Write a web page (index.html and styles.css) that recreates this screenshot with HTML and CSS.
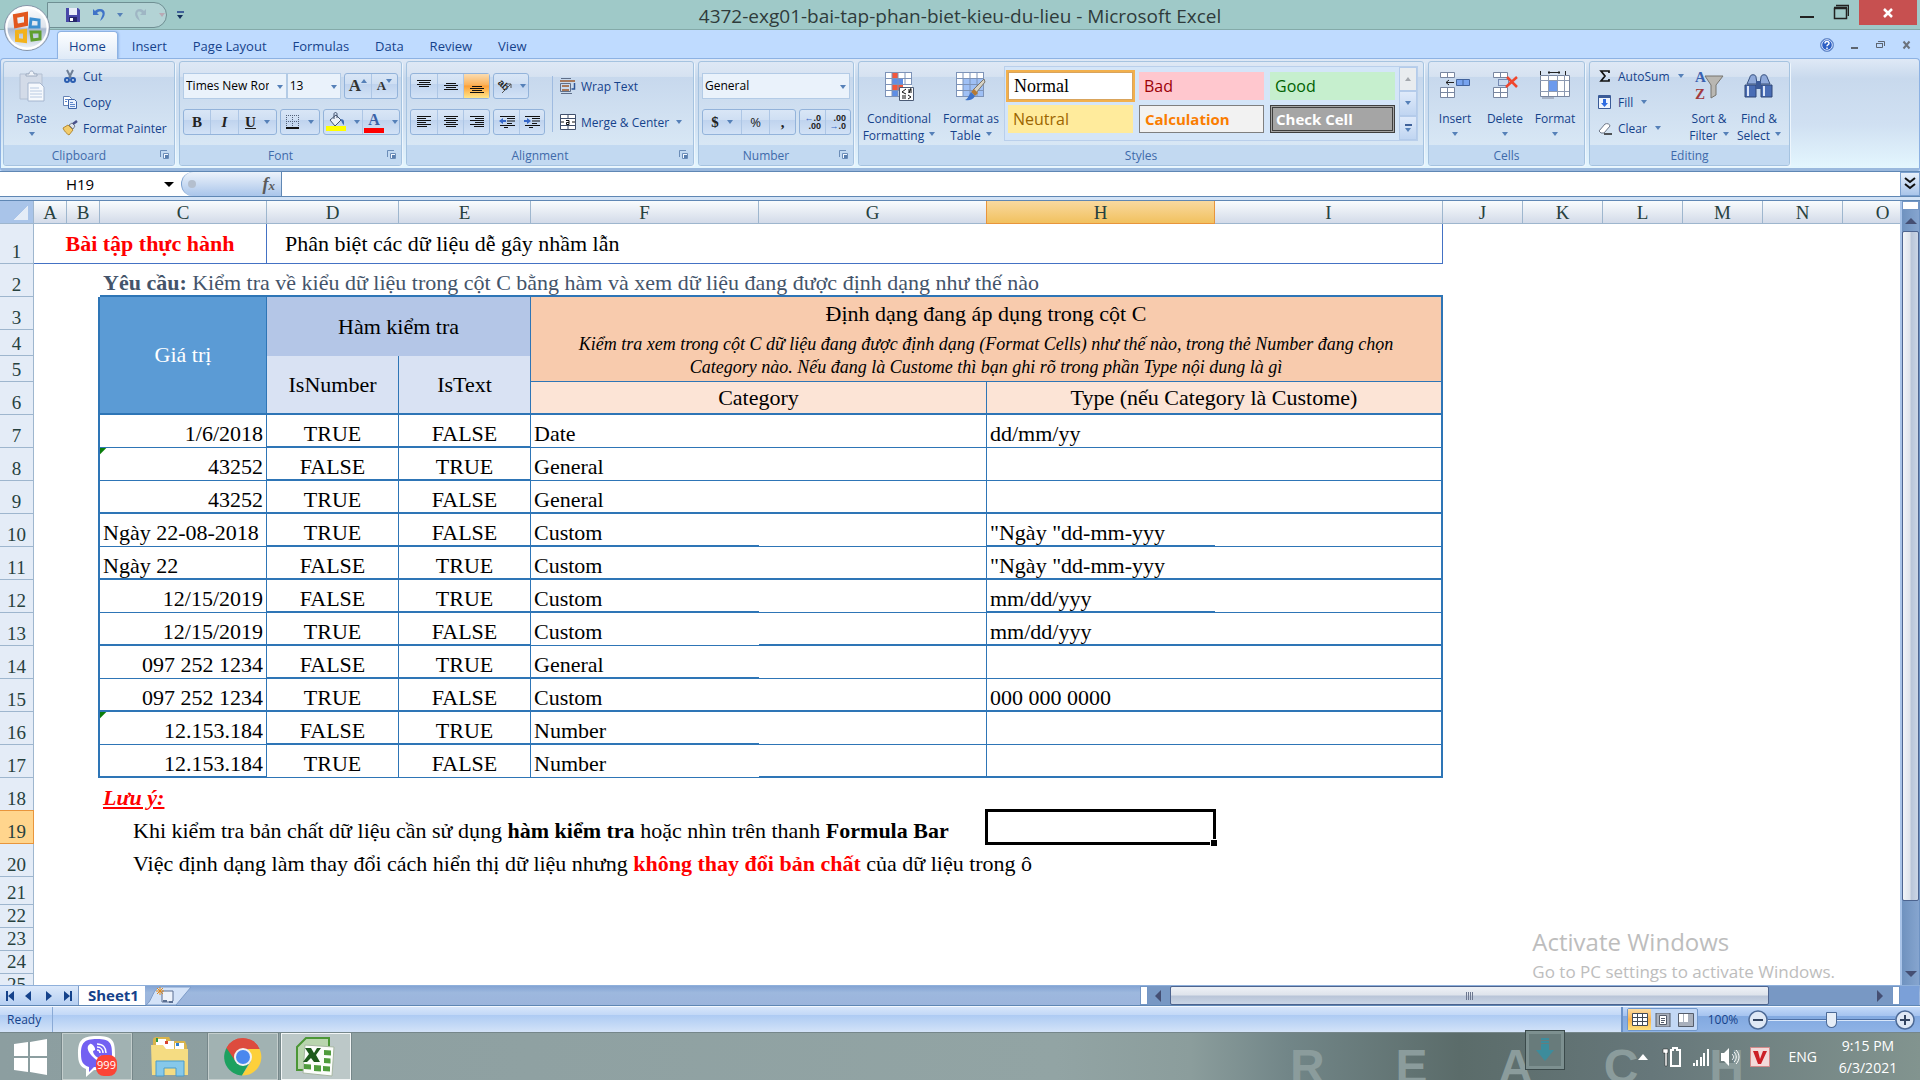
FILE: index.html
```html
<!DOCTYPE html>
<html lang="vi">
<head>
    <meta charset="UTF-8">
    <meta name="viewport" content="width=device-width, initial-scale=1.0">
    <title>4372-exg01-bai-tap-phan-biet-kieu-du-lieu - Microsoft Excel</title>
    <link rel="stylesheet" href="styles.css">
</head>
<body>
    <header class="titlebar">
        <button class="office-btn" aria-label="Office">
            <svg width="48" height="48" viewBox="0 0 48 48">
                <defs>
                    <linearGradient id="orb" x1="0" y1="0" x2="0" y2="1"><stop offset="0" stop-color="#fff"/><stop offset=".48" stop-color="#dde3ec"/><stop offset=".52" stop-color="#a9b9d0"/><stop offset="1" stop-color="#f4f8fd"/></linearGradient>
                </defs>
                <circle cx="24" cy="24" r="22.500" fill="url(#orb)" stroke="#8594a8"/>
                <circle cx="24" cy="24" r="20.500" fill="none" stroke="#fff" stroke-width="2"/>
                <g fill="none" stroke-width="4">
                    <path d="M12 12l11-2v10l-10 2z" stroke="#e2571e"/>
                    <path d="M28 15l8 1v7h-9z" stroke="#3c8fd0" stroke-width="3"/>
                    <path d="M14 28l8-1v10l-8-1z" stroke="#f3b21b"/>
                    <path d="M28 28h9v7l-8 1z" stroke="#5f9e2f" stroke-width="3"/>
                </g>
            </svg>
        </button>
        <div class="quick-access">
            <button aria-label="Save"><svg width="16" height="16"><path d="M1 1h12l2 2v12H1z" fill="#4747a8"/><path d="M4 1h8v7H4z" fill="#e8ecf8"/><path d="M4 10h8v5H4z" fill="#26266a"/><path d="M5 11h3v3H5z" fill="#fff"/></svg></button>
            <button aria-label="Undo"><svg width="16" height="16"><path d="M2 2v6h6L6 6c3-3 7-1 5 3l-2 5c7-5 6-13-1-12-2 0-3 1-4 2z" fill="#3f73c8"/></svg></button>
            <i class="caret"></i>
            <button aria-label="Redo"><svg width="16" height="16"><path d="M13 2v6H7l2-2C6 3 3 5 5 9l2 5C0 10 1 2 7 2c2 0 3 1 4 2z" fill="#9fb6c4"/></svg></button>
            <i class="caret faded"></i>
        </div>
        <button class="customize" aria-label="Customize toolbar"><i class="bar"></i><i class="caret"></i></button>
        <h1>4372-exg01-bai-tap-phan-biet-kieu-du-lieu - Microsoft Excel</h1>
        <div class="window-controls">
            <button aria-label="Minimize"><svg width="16" height="24"><path d="M1 16h14v2H1z" fill="#222"/></svg></button>
            <button aria-label="Restore"><svg width="16" height="24"><path d="M1.500 8.500h12v10h-12zM3 5.500h12.500V16M1 7.500h13" fill="none" stroke="#222" stroke-width="1.500"/></svg></button>
            <button class="close" aria-label="Close"><svg width="12" height="12"><path d="M2 2l8 8M10 2l-8 8" stroke="#fff" stroke-width="2.500"/></svg></button>
        </div>
    </header>

    <nav class="tabs">
        <a href="#" class="active">Home</a>
        <a href="#">Insert</a>
        <a href="#">Page Layout</a>
        <a href="#">Formulas</a>
        <a href="#">Data</a>
        <a href="#">Review</a>
        <a href="#">View</a>
        <div class="book-controls">
            <button aria-label="Help"><svg width="14" height="14"><circle cx="7" cy="7" r="6.500" fill="#2d5fc4" stroke="#6f92cc"/><circle cx="7" cy="7" r="5.300" fill="none" stroke="#dfe9fb"/><path d="M5 5.500c0-2.500 4-2.500 4-.300 0 1.600-2 1.500-2 3M7 9.500V11" stroke="#fff" stroke-width="1.500" fill="none"/></svg></button>
            <button aria-label="Minimize workbook"><svg width="10" height="14"><path d="M1 9h7v2H1z" fill="#5d6570"/></svg></button>
            <button aria-label="Restore workbook"><svg width="10" height="14"><path d="M.500 5.500h6v4h-6zM2 3.500h6.500V8" fill="none" stroke="#5d6570"/><path d="M0 5h7v1H0z" fill="#5d6570"/></svg></button>
            <button aria-label="Close workbook"><svg width="10" height="14"><path d="M1.500 3.500l6 7M7.500 3.500l-6 7" stroke="#6c737d" stroke-width="2"/></svg></button>
        </div>
    </nav>

    <section class="ribbon">
        <div class="group clipboard">
            <div class="group-body">
                <button class="big">
                    <svg width="28" height="32"><path d="M2 4h22v25H2z" fill="#d3dbe8" stroke="#b3c0d3"/><path d="M8 6V4h3c0-4 5-4 5 0h3v2z" fill="#eef2f8" stroke="#9dabc0"/><path d="M10 13h12l4 4v14H10z" fill="#f6f9fd" stroke="#a5b6cf"/><path d="M12 18h9M12 21h12M12 24h12M12 27h12" stroke="#b9cae2"/></svg>
                    <span>Paste</span>
                    <i class="caret"></i>
                </button>
                <div class="stack">
                    <button class="small"><svg width="16" height="16"><path d="M5 2l4 8M11 2L7 10" stroke="#6f7f96" stroke-width="2"/><circle cx="5" cy="12" r="2" fill="none" stroke="#2a5db0" stroke-width="2"/><circle cx="11" cy="12" r="2" fill="none" stroke="#2a5db0" stroke-width="2"/></svg>Cut</button>
                    <button class="small"><svg width="16" height="16"><path d="M1.500 2.500h6l2 2v7h-8z" fill="#fff" stroke="#6482b4"/><path d="M6.500 5.500h6l2 2v7h-8z" fill="#e9f1fd" stroke="#3d64a8"/><path d="M8 8.500h3M8 10.500h5M8 12.500h5M3 5.500h3M3 7.500h2" stroke="#5c86cb"/></svg>Copy</button>
                    <button class="small"><svg width="16" height="16"><path d="M1 8l5-3 5 5-4 5c-2-1-5-4-6-7z" fill="#f2cc6b" stroke="#b38a35"/><path d="M7 5l3-2 3 3-2 3z" fill="#dfe3ea" stroke="#777f8c"/><path d="M11 4l4-3" stroke="#49518a" stroke-width="2.500"/></svg>Format Painter</button>
                </div>
            </div>
            <div class="group-label has-launcher">Clipboard<svg class="launcher" width="9" height="9"><path d="M.500 7V.500H7" fill="none" stroke="#6b8db8"/><path d="M3.500 3.500h5v5h-5z" fill="#f4f8fd" stroke="#6b8db8"/><path d="M5 5h3v3H5z" fill="#5a7fae"/></svg></div>
        </div>

        <div class="group font">
            <div class="group-body rows">
                <div class="row">
                    <span class="combo font-name"><select aria-label="Font"><option>Times New Roman</option></select></span><span class="combo font-size"><select aria-label="Font size"><option>13</option></select></span>
                    <div class="btns grow">
                        <button class="serif" aria-label="Grow font">A<i class="tri up"></i></button>
                        <button class="serif less" aria-label="Shrink font">A<i class="tri"></i></button>
                    </div>
                </div>
                <div class="row">
                    <div class="btns">
                        <button class="serif w26"><b>B</b></button>
                        <button class="serif w28"><i>I</i></button>
                        <button class="serif w38"><u>U</u><i class="caret"></i></button>
                    </div>
                    <div class="btns">
                        <button class="w38" aria-label="Borders"><svg width="14" height="14"><path d="M.500 0v12M6.500 0v12M12.500 0v12M0 .500h13M0 6.500h13" stroke="#53627a" stroke-dasharray="1 1"/><path d="M0 13h13" stroke="#111" stroke-width="2"/></svg><i class="caret"></i></button>
                    </div>
                    <div class="btns">
                        <button class="w38" aria-label="Fill color"><svg width="20" height="20"><path d="M4 8l6-5 5 5-6 6z" fill="#eaf0f8" stroke="#42536e"/><path d="M8 7V2c0-2 3-2 3 0v4" fill="none" stroke="#42536e"/><path d="M14 7c5 0 4 3 4 6-2-1-2-4-4-6z" fill="#3e6db5"/><path d="M0 14h20v5H0z" fill="#ff0"/></svg><i class="caret"></i></button>
                        <button class="w37 font-color" aria-label="Font color"><span>A</span><i class="caret"></i></button>
                    </div>
                </div>
            </div>
            <div class="group-label has-launcher">Font<svg class="launcher" width="9" height="9"><path d="M.500 7V.500H7" fill="none" stroke="#6b8db8"/><path d="M3.500 3.500h5v5h-5z" fill="#f4f8fd" stroke="#6b8db8"/><path d="M5 5h3v3H5z" fill="#5a7fae"/></svg></div>
        </div>

        <div class="group alignment">
            <div class="group-body">
                <div class="rows left">
                    <div class="row">
                        <div class="btns">
                            <button class="w26" aria-label="Top align"><svg width="14" height="14"><path d="M0 1.500h14M2 3.500h11M0 5.500h14M2 7.500h10" stroke="#111"/></svg></button>
                            <button class="w26" aria-label="Middle align"><svg width="14" height="14"><path d="M2 4.500h10M0 6.500h14M2 8.500h10M0 10.500h14" stroke="#111"/></svg></button>
                            <button class="w26 on" aria-label="Bottom align"><svg width="14" height="14"><path d="M2 7.500h10M0 9.500h14M2 11.500h10M0 13.500h14" stroke="#111"/></svg></button>
                        </div>
                        <div class="btns">
                            <button class="w34" aria-label="Orientation"><svg width="16" height="16"><text class="ab" x="0" y="8" transform="rotate(45 4 8)">ab</text><path d="M6 15l9-9M15 6v4M15 6h-4" stroke="#555" fill="none"/></svg><i class="caret"></i></button>
                        </div>
                    </div>
                    <div class="row">
                        <div class="btns">
                            <button class="w26" aria-label="Align left"><svg width="14" height="12"><path d="M0 .500h14M0 2.500h9M0 4.500h14M0 6.500h9M0 8.500h14M0 10.500h10" stroke="#111"/></svg></button>
                            <button class="w26" aria-label="Center"><svg width="14" height="12"><path d="M0 .500h14M2 2.500h10M0 4.500h14M2 6.500h10M0 8.500h14M2 10.500h10" stroke="#111"/></svg></button>
                            <button class="w26" aria-label="Align right"><svg width="14" height="12"><path d="M0 .500h14M5 2.500h9M0 4.500h14M5 6.500h9M0 8.500h14M4 10.500h10" stroke="#111"/></svg></button>
                        </div>
                        <div class="btns">
                            <button class="w25" aria-label="Decrease indent"><svg width="16" height="14"><path d="M1 1.500h15M8 3.500h8M8 6h8M8 8.500h5M1 10.500h15M5 12.500h4" stroke="#111"/><path d="M0 6l4-3v2h3v2H4v2z" fill="#3566c8"/></svg></button>
                            <button class="w25" aria-label="Increase indent"><svg width="16" height="14"><path d="M1 1.500h15M8 3.500h8M8 6h8M8 8.500h5M1 10.500h15M5 12.500h4" stroke="#111"/><path d="M7 6L3 3v2H0v2h3v2z" fill="#3566c8"/></svg></button>
                        </div>
                    </div>
                </div>
                <div class="rows wraps">
                    <button class="small"><svg width="16" height="16"><path d="M1 .500h10M1 15.500h11" stroke="#5f6f8a"/><path d="M0 3h15M2 8h7M2 12h7" stroke="#9a5a2d" stroke-width="1.500"/><path d="M.500 5.500h10v8H.500z" fill="none" stroke="#5f6f8a"/><path d="M14.500 5v6h-3" fill="none" stroke="#2d5596" stroke-width="1.500"/></svg>Wrap Text</button>
                    <button class="small"><svg width="16" height="16"><path d="M.500.500h15v15H.500z" fill="#fff" stroke="#40506c"/><path d="M0 4.500h16M0 11.500h16M8 0v4M8 12v4" stroke="#40506c"/><path d="M1 8h3M12 8h3" stroke="#111"/><path d="M6 6.500h3v4H6.500v-2H9" fill="none" stroke="#111"/></svg>Merge &amp; Center<i class="caret"></i></button>
                </div>
            </div>
            <div class="group-label has-launcher">Alignment<svg class="launcher" width="9" height="9"><path d="M.500 7V.500H7" fill="none" stroke="#6b8db8"/><path d="M3.500 3.500h5v5h-5z" fill="#f4f8fd" stroke="#6b8db8"/><path d="M5 5h3v3H5z" fill="#5a7fae"/></svg></div>
        </div>

        <div class="group number">
            <div class="group-body rows">
                <div class="row">
                    <span class="combo format"><select aria-label="Number format"><option>General</option></select></span>
                </div>
                <div class="row">
                    <div class="btns">
                        <button class="serif w38"><b>$</b><i class="caret"></i></button>
                        <button class="w28 pct">%</button>
                        <button class="serif w26"><b>,</b></button>
                    </div>
                    <div class="btns">
                        <button class="w25 dec" aria-label="Increase decimal"><span><em>←</em>.0</span><span>.00</span></button>
                        <button class="w25 dec" aria-label="Decrease decimal"><span>.00</span><span><em>→</em>.0</span></button>
                    </div>
                </div>
            </div>
            <div class="group-label has-launcher">Number<svg class="launcher" width="9" height="9"><path d="M.500 7V.500H7" fill="none" stroke="#6b8db8"/><path d="M3.500 3.500h5v5h-5z" fill="#f4f8fd" stroke="#6b8db8"/><path d="M5 5h3v3H5z" fill="#5a7fae"/></svg></div>
        </div>

        <div class="group styles">
            <div class="group-body">
                <button class="big wide">
                    <svg width="32" height="32"><path d="M2 2h27v25H2z" fill="#fff"/><path d="M9 2h6v6H9zM9 14h11v6H9z" fill="#f2573c"/><path d="M9 8h11v6H9zM9 20h6v7H9z" fill="#5e8ee6"/><path d="M2 2.500h27M2 8.500h27M2 14.500h27M2 20.500h18M2 26.500h15M2.500 2v25M9 2v25M15 2v25M22 2v12M28.500 2v12" stroke="#7d93b8"/><path d="M16.500 17.500h14v13h-14z" fill="#fdfdfd" stroke="#4a5a74"/><path d="M23 19l-4 3 4 2M19 26h4M19 28h4M25 20h4M25 22h4M28 18l-2 5M25 25l3 2-3 2" fill="none" stroke="#111"/></svg>
                    <span>Conditional<br>Formatting <i class="caret"></i></span>
                </button>
                <button class="big wide">
                    <svg width="32" height="32"><path d="M1 2h28v25H1z" fill="#fff"/><path d="M8 8h21v18H8z" fill="#9fc0f5"/><path d="M1 2.500h28M1 8.500h28M1 14.500h28M1 20.500h28M1 26.500h28M1.500 2v25M8 2v25M15 2v25M22 2v25M28.500 2v25" stroke="#7d93b8"/><path d="M29 9l1 3-9 11-3-3z" fill="#d8d3c6" stroke="#7b766b"/><path d="M19 19l4 4-3 3-4-4z" fill="#b57b35"/><path d="M16 22l4 4c-2 4-6 5-10 4 3-1 4-5 6-8z" fill="#3f74c9"/></svg>
                    <span>Format as<br>Table <i class="caret"></i></span>
                </button>
                <div class="gallery">
                    <div class="gallery-items">
                        <button class="style-normal">Normal</button>
                        <button class="style-bad">Bad</button>
                        <button class="style-good">Good</button>
                        <button class="style-neutral">Neutral</button>
                        <button class="style-calc">Calculation</button>
                        <button class="style-check">Check Cell</button>
                    </div>
                    <div class="gallery-scroll">
                        <button class="off" aria-label="Scroll up"><i class="tri up"></i></button>
                        <button aria-label="Scroll down"><i class="tri"></i></button>
                        <button aria-label="More styles"><i class="bar"></i><i class="tri"></i></button>
                    </div>
                </div>
            </div>
            <div class="group-label">Styles</div>
        </div>

        <div class="group cells">
            <div class="group-body">
                <button class="big">
                    <svg width="32" height="32"><path d="M1.500 2.500h14v5h-14zM1.500 17.500h14v10h-14zM8.500 2v6M8.500 17v11M1 22.500h15" fill="#fff" stroke="#7886a0"/><path d="M17.500 9.500h13v6h-13zM24 9v7" fill="#77a3ee" stroke="#41629c"/><path d="M7 12.500h8M10 10l-3 2.500 3 2.500" fill="none" stroke="#222"/></svg>
                    <span>Insert</span><i class="caret"></i>
                </button>
                <button class="big">
                    <svg width="32" height="32"><path d="M4.500 2.500h14v5h-14zM4.500 17.500h14v10h-14zM11.500 2v6M11.500 17v11M4 22.500h15" fill="#fff" stroke="#7886a0"/><path d="M9.500 9.500h10v6h-10z" fill="none" stroke="#223a78" stroke-dasharray="1 1"/><path d="M18 7l10 10M28 7l-11 10" stroke="#f0462c" stroke-width="2.500"/></svg>
                    <span>Delete</span><i class="caret"></i>
                </button>
                <button class="big">
                    <svg width="32" height="32"><path d="M1.500 5.500h29v21h-29z" fill="#fff" stroke="#7886a0"/><path d="M9.500 10.500h9v11h-9z" fill="#6c9aec"/><path d="M1 10.500h29M1 21.500h29M9.500 5v21M18.500 5v21M25.500 5v21" stroke="#8d9ab2"/><path d="M1.500 1v4M26.500 1v4M9 2.500h12M10 1v3M20 1v3" stroke="#222"/><path d="M3 28h12" stroke="#a6b2c6" stroke-width="2"/></svg>
                    <span>Format</span><i class="caret"></i>
                </button>
            </div>
            <div class="group-label">Cells</div>
        </div>

        <div class="group editing">
            <div class="group-body">
                <div class="stack">
                    <button class="small"><svg width="14" height="16"><path d="M11 5V3H3l4 5-4 5h8v-2" fill="none" stroke="#111" stroke-width="1.700"/></svg>AutoSum<i class="caret"></i></button>
                    <button class="small"><svg width="14" height="16"><path d="M.500 1.500h12v13H.500z" fill="#eef4fd" stroke="#3a5b98"/><path d="M1 2h12v2H1z" fill="#3a5b98"/><path d="M5 5h3v4h2l-3.500 4L3 9h2z" fill="#2e6be0"/></svg>Fill<i class="caret"></i></button>
                    <button class="small"><svg width="14" height="16"><path d="M1 11l6-7c2-1 5 0 5 2l-6 7H3z" fill="#fff" stroke="#6d7787"/><path d="M6 14h8" stroke="#222" stroke-width="1.500"/></svg>Clear<i class="caret"></i></button>
                </div>
                <button class="big">
                    <svg width="32" height="32"><text class="az a" x="2" y="12">A</text><text class="az z" x="2" y="29">Z</text><path d="M12 6h18l-7 9v10l-5 3V15z" fill="#b9b7b2" stroke="#77756f"/></svg>
                    <span>Sort &amp;<br>Filter <i class="caret"></i></span>
                </button>
                <button class="big">
                    <svg width="32" height="32"><path d="M7 7c0-3 6-3 6 0l1 7H4zM18 7c0-3 6-3 6 0l3 7H17z" fill="#8fa9da" stroke="#38517f"/><path d="M2 15h11v12H2zM18 15h11v12H18z" fill="#4a6db5" stroke="#2f4676"/><path d="M13 11h5v8h-5z" fill="#3c5a98"/><path d="M5 16v10M21 16v10" stroke="#dce6f8" stroke-width="2"/></svg>
                    <span>Find &amp;<br>Select <i class="caret"></i></span>
                </button>
            </div>
            <div class="group-label">Editing</div>
        </div>
    </section>

    <section class="formula-bar">
        <span class="name-box"><input type="text" value="H19" aria-label="Name box"></span>
        <button class="fx" aria-label="Insert function"><i class="knob"></i><span>f<small>x</small></span></button>
        <input type="text" class="formula" aria-label="Formula bar">
        <button class="expand" aria-label="Expand formula bar"><svg width="12" height="14"><path d="M1 1l5 4 5-4M1 7l5 4 5-4" fill="none" stroke="#111" stroke-width="2"/></svg></button>
    </section>

    <main class="workspace">
        <div class="sheet-view">
            <table class="sheet">
                <colgroup>
                    <col class="c-head"><col class="c-ab"><col class="c-ab"><col class="c-c"><col class="c-de"><col class="c-de">
                    <col class="c-wide"><col class="c-wide"><col class="c-wide"><col class="c-wide">
                    <col class="c-std"><col class="c-std"><col class="c-std"><col class="c-std"><col class="c-std"><col class="c-std">
                </colgroup>
                <thead>
                    <tr>
                        <th class="corner"></th>
                        <th>A</th><th>B</th><th>C</th><th>D</th><th>E</th><th>F</th><th>G</th><th class="current">H</th><th>I</th>
                        <th>J</th><th>K</th><th>L</th><th>M</th><th>N</th><th>O</th>
                    </tr>
                </thead>
                <tbody>
                    <tr class="r1"><th>1</th><td colspan="3" class="heading">Bài tập thực hành</td><td colspan="6" class="subject">Phân biệt các dữ liệu dễ gây nhầm lẫn</td><td colspan="6"></td></tr>
                    <tr><th>2</th><td></td><td></td><td colspan="7" class="request thick"><b>Yêu cầu:</b> Kiểm tra về kiểu dữ liệu trong cột C bằng hàm và xem dữ liệu đang được định dạng như thế nào</td><td colspan="6"></td></tr>
                    <tr><th>3</th><td></td><td class="edge"></td><td rowspan="4" class="h-value b thick">Giá trị</td><td colspan="2" rowspan="2" class="h-check">Hàm kiểm tra</td><td colspan="4" class="h-format">Định dạng đang áp dụng trong cột C</td><td colspan="6"></td></tr>
                    <tr class="short"><th>4</th><td></td><td class="edge"></td><td colspan="4" rowspan="2" class="h-note b">Kiểm tra xem trong cột C dữ liệu đang được định dạng (Format Cells) như thế nào, trong thẻ Number đang chọn<br>Category nào. Nếu đang là Custome thì bạn ghi rõ trong phần Type nội dung là gì</td><td colspan="6"></td></tr>
                    <tr class="short"><th>5</th><td></td><td class="edge"></td><td rowspan="2" class="h-sub b thick">IsNumber</td><td rowspan="2" class="h-sub b thick">IsText</td><td colspan="6"></td></tr>
                    <tr><th>6</th><td></td><td class="edge"></td><td colspan="2" class="h-cat b thick">Category</td><td colspan="2" class="h-cat last thick">Type (nếu Category là Custome)</td><td colspan="6"></td></tr>
                    <tr><th>7</th><td></td><td class="edge"></td><td class="b num">1/6/2018</td><td class="b mid thick">TRUE</td><td class="b mid thick">FALSE</td><td class="f">Date</td><td class="b"></td><td class="f">dd/mm/yy</td><td class="last"></td><td colspan="6"></td></tr>
                    <tr><th>8</th><td></td><td class="edge"></td><td class="b num flagged">43252</td><td class="b mid thick">FALSE</td><td class="b mid thick">TRUE</td><td class="f">General</td><td class="b"></td><td class="f"></td><td class="last"></td><td colspan="6"></td></tr>
                    <tr><th>9</th><td></td><td class="edge"></td><td class="b num thick">43252</td><td class="b mid thick">TRUE</td><td class="b mid thick">FALSE</td><td class="f thick">General</td><td class="b thick"></td><td class="f thick"></td><td class="last thick"></td><td colspan="6"></td></tr>
                    <tr><th>10</th><td></td><td class="edge"></td><td class="b">Ngày 22-08-2018</td><td class="b mid thick">TRUE</td><td class="b mid thick">FALSE</td><td class="f thick">Custom</td><td class="b"></td><td class="f thick">"Ngày "dd-mm-yyy</td><td class="last"></td><td colspan="6"></td></tr>
                    <tr><th>11</th><td></td><td class="edge"></td><td class="b thick">Ngày 22</td><td class="b mid thick">FALSE</td><td class="b mid thick">TRUE</td><td class="f thick">Custom</td><td class="b thick"></td><td class="f thick">"Ngày "dd-mm-yyy</td><td class="last thick"></td><td colspan="6"></td></tr>
                    <tr><th>12</th><td></td><td class="edge"></td><td class="b num">12/15/2019</td><td class="b mid thick">FALSE</td><td class="b mid thick">TRUE</td><td class="f thick">Custom</td><td class="b"></td><td class="f thick">mm/dd/yyy</td><td class="last"></td><td colspan="6"></td></tr>
                    <tr><th>13</th><td></td><td class="edge"></td><td class="b num thick">12/15/2019</td><td class="b mid thick">TRUE</td><td class="b mid thick">FALSE</td><td class="f">Custom</td><td class="b thick"></td><td class="f thick">mm/dd/yyy</td><td class="last thick"></td><td colspan="6"></td></tr>
                    <tr><th>14</th><td></td><td class="edge"></td><td class="b num">097 252 1234</td><td class="b mid thick">FALSE</td><td class="b mid thick">TRUE</td><td class="f thick">General</td><td class="b"></td><td class="f"></td><td class="last"></td><td colspan="6"></td></tr>
                    <tr><th>15</th><td></td><td class="edge"></td><td class="b num thick">097 252 1234</td><td class="b mid thick">TRUE</td><td class="b mid thick">FALSE</td><td class="f thick">Custom</td><td class="b thick"></td><td class="f thick">000 000 0000</td><td class="last thick"></td><td colspan="6"></td></tr>
                    <tr><th>16</th><td></td><td class="edge"></td><td class="b num flagged">12.153.184</td><td class="b mid thick">FALSE</td><td class="b mid thick">TRUE</td><td class="f thick">Number</td><td class="b"></td><td class="f"></td><td class="last"></td><td colspan="6"></td></tr>
                    <tr><th>17</th><td></td><td class="edge"></td><td class="b num thick">12.153.184</td><td class="b mid">TRUE</td><td class="b mid">FALSE</td><td class="f">Number</td><td class="b thick"></td><td class="f thick"></td><td class="last thick"></td><td colspan="6"></td></tr>
                    <tr><th>18</th><td></td><td></td><td class="note-title">Lưu ý:</td><td colspan="12"></td></tr>
                    <tr><th class="current">19</th><td></td><td></td><td colspan="5" class="indent">Khi kiểm tra bản chất dữ liệu cần sử dụng <b>hàm kiểm tra</b> hoặc nhìn trên thanh <b>Formula Bar</b></td><td class="active-cell"></td><td colspan="7"></td></tr>
                    <tr><th>20</th><td></td><td></td><td colspan="6" class="indent">Việc định dạng làm thay đổi cách hiển thị dữ liệu nhưng <b class="red">không thay đổi bản chất</b> của dữ liệu trong ô</td><td colspan="7"></td></tr>
                    <tr class="r21"><th>21</th><td colspan="15"></td></tr>
                    <tr class="plain"><th>22</th><td colspan="15"></td></tr>
                    <tr class="plain"><th>23</th><td colspan="15"></td></tr>
                    <tr class="plain"><th>24</th><td colspan="15"></td></tr>
                    <tr class="plain"><th>25</th><td colspan="15"></td></tr>
                </tbody>
            </table>
            <div class="watermark">
                <p class="big-line">Activate Windows</p>
                <p>Go to PC settings to activate Windows.</p>
            </div>
        </div>
        <div class="vscroll">
            <div class="split"></div>
            <i class="arrow up"></i>
            <div class="thumb"></div>
            <i class="arrow down"></i>
        </div>
    </main>

    <section class="sheet-bar">
        <div class="sheet-nav">
            <button aria-label="First sheet"><svg width="8" height="10"><path d="M0 0h2v10H0zM8 0v10L2 5z" fill="#15428b"/></svg></button>
            <button aria-label="Previous sheet"><svg width="8" height="10"><path d="M6 0v10L0 5z" fill="#15428b"/></svg></button>
            <button aria-label="Next sheet"><svg width="8" height="10"><path d="M1 0v10l6-5z" fill="#15428b"/></svg></button>
            <button aria-label="Last sheet"><svg width="8" height="10"><path d="M6 0h2v10H6zM0 0v10l6-5z" fill="#15428b"/></svg></button>
        </div>
        <a href="#" class="sheet-tab">Sheet1</a>
        <button class="new-sheet" aria-label="Insert worksheet">
            <svg width="48" height="20"><path d="M1 19C7 16 8 1 16 1h30L31 19z" fill="#d4e3f8" stroke="#7d9cc9"/><path d="M17 5h11v10l-3 1H17z" fill="#eef3fb" stroke="#5a6f92"/><path d="M18 15h4M24 16h4" stroke="#5a6f92" stroke-width="2"/><path d="M15 1v8M11 5h8M12 2l6 6M18 2l-6 6" stroke="#e08a1c"/></svg>
        </button>
        <div class="track"></div>
        <div class="hscroll">
            <div class="split"></div>
            <i class="arrow left"></i>
            <div class="thumb"><svg width="8" height="8"><path d="M.500 0v8M2.500 0v8M4.500 0v8M6.500 0v8" stroke="#6d7890"/></svg></div>
            <i class="arrow right"></i>
            <div class="split"></div>
        </div>
    </section>

    <footer class="statusbar">
        <span class="ready">Ready</span>
        <div class="zoom-area">
            <div class="views">
                <button class="on" aria-label="Normal view"><svg width="16" height="14"><path d="M.500.500h15v12H.500zM0 4.500h16M0 8.500h16M5.500 0v13M10.500 0v13" fill="#fff" stroke="#444b57"/></svg></button>
                <button aria-label="Page layout view"><svg width="16" height="14"><path d="M1 0h14v14H1z" fill="#a9b0bc" stroke="#555d6b"/><path d="M4.500 2.500h7v9h-7z" fill="#fff" stroke="#555d6b"/><path d="M6 5.500h4M6 7.500h4M6 9.500h3" stroke="#555d6b"/></svg></button>
                <button aria-label="Page break view"><svg width="16" height="14"><path d="M.500.500h15v13H.500z" fill="#a9b0bc" stroke="#555d6b"/><path d="M1 1h4v8H1zM6 1h4v8H6z" fill="#fff"/></svg></button>
            </div>
            <span class="zoom-value">100%</span>
            <button class="round" aria-label="Zoom out"><svg width="20" height="20"><circle cx="10" cy="10" r="9" fill="#dfe8f5" stroke="#4d6a96" stroke-width="1.500"/><path d="M5 10h10" stroke="#32435f" stroke-width="2"/></svg></button>
            <input type="range" min="0" max="100" value="50" aria-label="Zoom">
            <button class="round" aria-label="Zoom in"><svg width="20" height="20"><circle cx="10" cy="10" r="9" fill="#dfe8f5" stroke="#4d6a96" stroke-width="1.500"/><path d="M5 10h10M10 5v10" stroke="#32435f" stroke-width="2"/></svg></button>
        </div>
    </footer>

    <div class="taskbar">
        <div class="wallpaper" aria-hidden="true"><span>R</span><span>E</span><span>A</span><span>C</span><span>H</span></div>
        <button class="start" aria-label="Start"><svg width="34" height="36"><path d="M0 5l14-2v14H0zM16 3l17-3v17H16zM0 19h14v14L0 31zM16 19h17v17l-17-3z" fill="#fff"/></svg></button>
        <button class="task open" aria-label="Viber">
            <svg width="40" height="44"><path d="M20 1C4 1 1 6 1 19c0 8 2 13 8 15v8l8-7c19 1 21-4 21-16C38 6 36 1 20 1z" fill="#fff"/><path d="M20 4C7 4 4 8 4 19c0 8 2 11 8 13v5l5-5c15 1 18-2 18-13C35 8 33 4 20 4z" fill="#7360f2"/><path d="M13 9c-5 3-1 9 3 13s9 7 12 4c2-2-3-6-5-5l-1 2c-3-1-6-4-6-7l2-1c1-2-3-7-5-6z" fill="#fff"/><path d="M20 9c6 0 9 4 9 9M20 12c4 0 6 3 6 6M20 15c2 0 3 1 3 3" fill="none" stroke="#fff" stroke-width="1.500"/></svg>
            <span class="badge">999</span>
        </button>
        <button class="task" aria-label="File Explorer">
            <svg width="40" height="42"><path d="M3 4c0-3 3-3 4-3h12l2 4h14l2 5v28H2z" fill="#d9b44c"/><path d="M6 3h10v8H6zM14 5h10v8H14zM25 7h9v6h-9z" fill="#fff"/><path d="M6 2h2v4H6z" fill="#2f9a46"/><path d="M15 5h3v3h-3z" fill="#d8432e"/><path d="M26 7h3v3h-3z" fill="#2f7fd0"/><path d="M1 9h12l3 4h22v26H2z" fill="#f5dc82"/><path d="M6 40V25h28v15h-8v-8H14v8z" fill="#86c8ea" stroke="#4b9ccb"/></svg>
        </button>
        <button class="task open" aria-label="Chrome">
            <svg width="38" height="40" viewBox="0 0 38 40"><path d="M2.500 11A18.500 18.500 0 0 1 35.500 12H19z" fill="#dd4b3e"/><path d="M2.500 11A18.500 18.500 0 0 0 18 38.500l8-14z" fill="#1da160"/><path d="M35.500 12A18.500 18.500 0 0 1 18 38.500l9-14-3-12.500z" fill="#fdd03b"/><path d="M2.500 11L12 25l4-13h19.500A18.500 18.500 0 0 0 2.500 11z" fill="#dd4b3e"/><circle cx="19" cy="20" r="9" fill="#f2f2f2"/><circle cx="19" cy="20" r="7" fill="#4a88ee"/></svg>
        </button>
        <button class="task open current" aria-label="Excel">
            <svg width="40" height="40"><path d="M1 10L10 1h23v32H1z" fill="#b9d5ae" stroke="#4b9636" stroke-width="2"/><path d="M9 8l29 2-2 29-29-3z" fill="#fbfdfa" stroke="#a7b7a2"/><path d="M28 13l7 .500v5l-7-.500zM28 21l6.500.500v5L28 26zM27 29l7 .500v5l-7-.500zM18 28l7 .500v6l-7-.500zM8 27l7 .500v5l-7-.500z" fill="#4f9c3c"/><path d="M9 11h6l3 5 3-5h4l-5 7 4 7h-6l-3-4-4 4H7l6-8z" fill="#1e5a1c"/></svg>
        </button>
        <div class="gadget"><svg width="20" height="24"><path d="M6 0h8v2H6zM6 3h8v2H6zM6 6h8v6h5l-9 11L1 12h5z" fill="#3d8c9c"/></svg></div>
        <div class="tray">
            <svg width="10" height="6"><path d="M0 6l5-6 5 6z" fill="#fff"/></svg>
            <svg width="20" height="20"><path d="M1 2h5v4H5v13H3V6H1z" fill="#fff" stroke="#222" stroke-width=".500"/><path d="M9 3h2V1h4v2h3v16H9z" fill="none" stroke="#fff" stroke-width="2"/></svg>
            <svg width="18" height="18"><path d="M1 15h2v3H1zM4 12h2v6H4zM8 9h2v9H8zM11 5h2v13h-2zM15 1h2v17h-2z" fill="#fff"/></svg>
            <svg width="20" height="20"><path d="M1 6h3l5-5v18l-5-5H1z" fill="#fff"/><path d="M12 7c2 2 2 4 0 6M14 5c3 3 3 7 0 10M16 3c4 4 4 10 0 14" fill="none" stroke="#fff"/></svg>
            <svg width="20" height="20"><path d="M.500.500h19v19H.500z" fill="#f3dada" stroke="#d28a8a"/><path d="M3 4h5l2 8 3-8h4l-6 13H8z" fill="#cc1f26"/></svg>
            <span class="lang">ENG</span>
            <div class="clock">9:15 PM<br>6/3/2021</div>
        </div>
    </div>
</body>
</html>
```
FILE: styles.css
```css
* {
    box-sizing: border-box;
}
body {
    margin: 0;
    height: 100vh;
    display: flex;
    flex-direction: column;
    overflow: hidden;
    font-family: "Open Sans", "Noto Sans", sans-serif;
    font-size: 12px;
    color: #15428b;
    background: #bfdbff;
}
button {
    margin: 0;
    padding: 0;
    border: none;
    background: none;
    font: inherit;
    color: inherit;
    display: flex;
    align-items: center;
    justify-content: center;
}
a {
    color: inherit;
    text-decoration: none;
}
svg {
    display: block;
    flex: none;
}
.caret, .tri {
    flex: none;
    width: 0;
    height: 0;
    display: inline-block;
    border: 3px solid transparent;
    border-top: 4px solid #5580b8;
    border-bottom: none;
}
.tri.up {
    border-top: none;
    border-bottom: 4px solid #5580b8;
}
.bar {
    width: 7px;
    height: 2px;
    background: #3f6199;
}

/* title bar */
.titlebar {
    position: relative;
    flex: none;
    height: 30px;
    display: flex;
    background: #9fc9c8;
    border-bottom: 1px solid #84aaa9;
}
.office-btn {
    position: absolute;
    left: 3px;
    top: 4px;
    z-index: 2;
}
.quick-access {
    display: flex;
    align-items: center;
    gap: 10px;
    width: 120px;
    height: 26px;
    margin: 2px 0 0 47px;
    padding-left: 17px;
    border: 1px solid #6f8f93;
    border-radius: 0 13px 13px 0;
    background: #b3d3d5;
}
.faded {
    border-top-color: #b9a9b4;
}
.customize {
    flex-direction: column;
    gap: 2px;
    margin: 0 0 0 8px;
    width: 10px;
}
.customize .caret {
    border-top-color: #15305c;
}
.titlebar h1 {
    position: absolute;
    left: 0;
    right: 0;
    margin: 0;
    text-align: center;
    font-size: 19px;
    font-weight: 400;
    line-height: 32px;
    color: #2f3b3b;
    pointer-events: none;
}
.window-controls {
    margin-left: auto;
    margin-right: 3px;
    display: flex;
    align-items: flex-start;
}
.window-controls svg {
    margin-right: 18px;
}
.window-controls .close {
    width: 58px;
    height: 25px;
    margin-left: -8px;
    background: #c75050;
}
.window-controls .close svg {
    margin: 0;
}

/* tabs */
.tabs {
    flex: none;
    display: flex;
    gap: 2px;
    height: 28px;
    padding: 1px 8px 0 57px;
    font-size: 13px;
    line-height: 30px;
}
.tabs a {
    height: 28px;
    padding: 0 12px;
}
.tabs .active {
    position: relative;
    border: 1px solid #8db2e3;
    border-bottom: none;
    border-radius: 4px 4px 0 0;
    padding: 0 11px;
    line-height: 28px;
    background: linear-gradient(#fdfeff, #dfeaf7);
    box-shadow: 1px 0 2px #92b6e6;
}
.book-controls {
    display: flex;
    gap: 16px;
    margin-left: auto;
}

/* ribbon */
.ribbon {
    flex: none;
    display: flex;
    gap: 4px;
    height: 113px;
    padding: 2px;
    border: 1px solid #8db2e3;
    border-bottom: 3px solid #9ab8dd;
    border-radius: 4px 4px 3px 3px;
    background: linear-gradient(#dfe9f6, #c8d9ed 18%, #d0e0f2 60%, #e4f6fe);
}
.group {
    display: flex;
    flex-direction: column;
    border: 1px solid #a5c3e0;
    border-radius: 3px;
    overflow: hidden;
    background: linear-gradient(#dee8f5, #d6e2f1 14%, #c7d8ed 15%, #d9e8f5 85%);
    box-shadow: 1px 1px 0 #eef6fd;
}
.clipboard { width: 172px; }
.font { width: 223px; }
.alignment { width: 288px; }
.number { width: 156px; }
.styles { width: 566px; }
.cells { width: 157px; }
.editing { width: 201px; }
.group-body {
    display: flex;
    flex: 1;
    min-height: 0;
}
.group-label {
    position: relative;
    flex: none;
    height: 20px;
    line-height: 22px;
    text-align: center;
    color: #3e6aaa;
    background: #c2d9f1;
}
.has-launcher {
    padding-right: 20px;
}
.launcher {
    position: absolute;
    right: 5px;
    top: 5px;
}
.big {
    flex-direction: column;
    justify-content: flex-start;
    width: 50px;
    padding-top: 8px;
    line-height: 17px;
    text-align: center;
    white-space: nowrap;
}
.big svg {
    height: 32px;
    margin-bottom: 8px;
}
.big > .caret {
    margin-top: 5px;
}
.big span .caret {
    margin: 0 0 4px 2px;
}
.big.wide {
    width: 72px;
}
.clipboard .big {
    width: 55px;
}
.stack {
    display: flex;
    flex-direction: column;
    padding-top: 1px;
}
.small {
    height: 26px;
    justify-content: flex-start;
    gap: 5px;
    white-space: nowrap;
}
.clipboard .small {
    margin-left: 3px;
}
.rows {
    display: flex;
    flex-direction: column;
    gap: 10px;
    padding: 11px 3px 0;
}
.row {
    display: flex;
    gap: 3px;
}
.btns {
    display: flex;
    height: 26px;
    border: 1px solid #93b3da;
    border-radius: 3px;
    background: linear-gradient(#d9e6f6, #cfdff3 40%, #bfd3ee 41%, #d2e2f6);
}
.btns button {
    gap: 5px;
    color: #222;
}
.btns button + button {
    border-left: 1px solid #adc6e5;
}
.w25 { width: 25px; }
.w26 { width: 26px; }
.w28 { width: 28px; }
.w34 { width: 34px; }
.w37 { width: 37px; }
.w38 { width: 38px; }
.serif {
    font-family: "Liberation Serif", serif;
    font-size: 15px;
}
.serif u, .serif i {
    font-weight: bold;
}
.btns .caret {
    margin-left: 3px;
}
.grow button {
    width: 26px;
    gap: 0;
    font-size: 17px;
    font-weight: bold;
    color: #333;
}
.grow .less {
    font-size: 13px;
}
.grow .tri {
    margin-bottom: 10px;
}
.font-color span {
    width: 20px;
    font: bold 16px/16px "Liberation Serif", serif;
    color: #3a62a8;
    border-bottom: 5px solid #f00;
}
.btns .on {
    background: linear-gradient(#fbdcb0, #fbb25a 45%, #fd9f37 50%, #ffe68a);
}
.btns .pct {
    font-size: 13px;
}
.btns .dec {
    flex-direction: column;
    gap: 0;
    align-items: flex-end;
    padding-right: 4px;
    font: bold 9px/8px "Liberation Sans", sans-serif;
}
.dec em {
    font-style: normal;
    color: #3566c8;
}
.ab {
    font: bold 10px "Liberation Sans", sans-serif;
    fill: #222;
}
.az {
    font: bold 15px "Liberation Serif", serif;
}
.az.a { fill: #3a62b0; }
.az.z { fill: #a23a3e; }
.combo {
    position: relative;
    height: 26px;
}
.combo select {
    width: 100%;
    height: 26px;
    padding: 0 17px 2px 2px;
    appearance: none;
    border: 1px solid #b3cbe6;
    border-radius: 0;
    background: #eaf2fb;
    font: inherit;
    color: #000;
}
.combo::after, .name-box::after {
    content: "";
    position: absolute;
    right: 4px;
    top: 12px;
    border: 3px solid transparent;
    border-top: 4px solid #5580b8;
    border-bottom: none;
}
.font-name { width: 105px; }
.font-size {
    width: 55px;
    margin-left: -3px;
}
.format { width: 148px; }
.alignment .left {
    width: 145px;
    padding-right: 0;
}
.wraps {
    gap: 10px;
    padding-left: 8px;
    position: relative;
}
.wraps::before {
    content: "";
    position: absolute;
    left: 0;
    top: 14px;
    height: 56px;
    border-left: 1px solid #9fbbe0;
}
.small .caret {
    margin-left: 2px;
}

/* style gallery */
.styles .big:first-child {
    margin-left: 4px;
}
.gallery {
    display: flex;
    width: 414px;
    height: 75px;
    margin: 4px 0 0 -3px;
    border: 1px solid #b9cfeb;
    background: #d4e5f8;
}
.gallery-items {
    flex: 1;
    display: grid;
    grid-template-columns: repeat(3, 1fr);
    grid-auto-rows: 28px;
    gap: 5px 6px;
    padding: 5px 4px 0 3px;
    font-size: 16px;
}
.gallery-items button {
    justify-content: flex-start;
    padding-left: 5px;
}
.gallery-items .style-normal {
    font-family: "Liberation Serif", serif;
    font-size: 18px;
    color: #000;
    background: #fff;
    outline: 2px solid #f2b04d;
    border: 1px solid #d9a45c;
}
.style-bad { background: #ffc7ce; color: #9c0006; }
.style-good { background: #c6efce; color: #006100; }
.style-neutral { background: #ffeb9c; color: #9c6500; }
.style-calc {
    background: #f2f2f2;
    color: #fa7d00;
    font-weight: bold;
}
.style-check {
    background: #a5a5a5;
    color: #fff;
    font-weight: bold;
}
.gallery-items .style-calc {
    border: 1px solid #7f7f7f;
}
.gallery-items .style-check {
    border: 3px double #3f3f3f;
    padding-left: 3px;
}
.gallery-items .style-calc, .gallery-items .style-check {
    font-size: 15px;
}
.gallery-scroll {
    width: 18px;
    display: flex;
    flex-direction: column;
}
.gallery-scroll button {
    flex: 1;
    flex-direction: column;
    gap: 2px;
    border: 1px solid #b4cbea;
    background: linear-gradient(#dfeafa, #c0d5f1);
}
.gallery-scroll .off {
    background: #e9ecef;
}
.gallery-scroll .off .tri {
    border-bottom-color: #a3a7ad;
}
.cells .group-body {
    padding-left: 1px;
}
.editing .small {
    gap: 6px;
}
.editing .stack {
    width: 86px;
    padding-left: 8px;
    margin-right: 8px;
}

/* formula bar */
.formula-bar {
    flex: none;
    display: flex;
    height: 30px;
    border-top: 1px solid #5f87b4;
    border-bottom: 1px solid #5f87b4;
    box-shadow: inset 0 -3px 0 #d3e3f6, inset 0 -4px 0 #5f87b4;
    background: #fff;
    padding-bottom: 4px;
}
.formula-bar input {
    border: none;
    background: none;
    outline: none;
    font: inherit;
}
.name-box {
    position: relative;
    width: 181px;
}
.name-box input {
    width: 160px;
    height: 24px;
    text-align: center;
    font-size: 15px;
    color: #000;
}
.name-box::after {
    right: 7px;
    top: 10px;
    border-width: 5px 5px 0;
    border-top-color: #000;
}
.fx {
    width: 101px;
    justify-content: space-between;
    padding: 0 6px;
    border-left: 1px solid #7ba0cf;
    border-right: 1px solid #5f87b4;
    border-radius: 12px 0 0 12px;
    background: linear-gradient(#edf3fb, #a9c5ea);
    font: italic bold 18px "Liberation Serif", serif;
    color: #5a5a5a;
}
.fx small {
    font-size: 13px;
}
.knob {
    width: 8px;
    height: 8px;
    border-radius: 50%;
    background: #b4bfce;
}
.formula-bar .formula {
    flex: 1;
}
.expand {
    width: 20px;
    border: 1px solid #7ba0cf;
    background: linear-gradient(#e7f0fb, #a9c5ea);
}

/* worksheet */
.workspace {
    flex: 1;
    min-height: 0;
    display: flex;
    background: #fff;
}
.sheet-view {
    position: relative;
    flex: 1;
    min-width: 0;
    overflow: hidden;
}
.sheet {
    width: 1923px;
    table-layout: fixed;
    border-collapse: separate;
    border-spacing: 0;
    font-family: "Liberation Serif", "Times New Roman", serif;
    font-size: 22px;
    line-height: 24px;
    color: #000;
}
.c-head { width: 34px; }
.c-ab { width: 33px; }
.c-c { width: 167px; }
.c-de { width: 132px; }
.c-wide { width: 228px; }
.c-std { width: 80px; }
.sheet th {
    padding: 0;
    border-right: 1px solid #9eb6ce;
    border-bottom: 1px solid #9eb6ce;
    font-size: 19px;
    font-weight: 400;
    line-height: 20px;
    color: #27413e;
}
.sheet thead th {
    height: 23px;
    padding-top: 2px;
    background: linear-gradient(#f9fcfd, #d3dbe9);
}
.sheet tbody th {
    padding-bottom: 1px;
    vertical-align: bottom;
    background: #e4ecf7;
}
.sheet thead .corner {
    background: linear-gradient(135deg, transparent 70%, #e4ecf7 70%) 0 0 / 28px 19px no-repeat, #a9c4e9;
}
.sheet thead .current {
    background: linear-gradient(#f9d99f, #f1c15f);
    border-color: #e8953c;
    box-shadow: -1px 0 0 #e8953c;
}
.sheet tbody .current {
    background: #ffd58d;
    border-color: #e8953c;
    box-shadow: 0 -1px 0 #e8953c;
}
.sheet tbody tr { height: 33px; }
.sheet tbody .r1 { height: 40px; }
.sheet tbody .short { height: 26px; }
.sheet tbody .r21 { height: 28px; }
.sheet tbody .plain { height: 23px; }
.sheet td {
    padding: 0 3px 1px;
    vertical-align: bottom;
    white-space: nowrap;
}
.sheet .heading {
    text-align: center;
    vertical-align: middle;
    font-weight: bold;
    color: #f00;
    border-right: 1px solid #4472c4;
    border-bottom: 1px solid #4472c4;
}
.sheet .subject {
    padding-left: 18px;
    vertical-align: middle;
    border-right: 1px solid #4472c4;
    border-bottom: 1px solid #4472c4;
}
.sheet .heading, .sheet .subject {
    padding-bottom: 0;
}
.sheet .request {
    color: #44546a;
    border-bottom: 2px solid #2e75b6;
}
.sheet .edge {
    border-right: 2px solid #2e75b6;
}
.sheet .b, .sheet .f, .sheet .last {
    border-bottom: 1px solid #2e75b6;
}
.sheet .b {
    border-right: 1px solid #2e75b6;
}
.sheet .last {
    border-right: 2px solid #2e75b6;
}
.sheet .thick {
    border-bottom-width: 2px;
    padding-bottom: 0;
}
.num {
    text-align: right;
}
.mid {
    text-align: center;
}
.sheet .h-value, .sheet .h-check, .sheet .h-format, .sheet .h-note, .sheet .h-sub, .sheet .h-cat {
    text-align: center;
    vertical-align: middle;
    padding-bottom: 0;
}
.h-value {
    background: #5b9bd5;
    color: #fff;
}
.sheet .h-check {
    background: #b4c6e7;
    border-right: 1px solid #2e75b6;
}
.h-sub { background: #d9e2f3; }
.sheet .h-format {
    background: #f8cbad;
    border-right: 2px solid #2e75b6;
}
.sheet .h-note {
    background: #f8cbad;
    border-right: 2px solid #2e75b6;
    font-size: 18px;
    font-style: italic;
    line-height: 23px;
}
.h-cat { background: #fce4d6; }
.flagged {
    background: linear-gradient(135deg, #0a7d0a 4px, transparent 5px);
}
.note-title {
    font-weight: bold;
    font-style: italic;
    color: #f00;
    text-decoration: underline;
}
.sheet .indent {
    padding-left: 33px;
}
.red {
    color: #f00;
}
.active-cell {
    position: relative;
}
.active-cell::before {
    content: "";
    position: absolute;
    inset: -2px -1px -1px -2px;
    border: 3px solid #000;
}
.active-cell::after {
    content: "";
    position: absolute;
    right: -2px;
    bottom: -2px;
    width: 6px;
    height: 6px;
    background: #000;
    border: 1px solid #fff;
    border-right: none;
    border-bottom: none;
}
.watermark {
    position: absolute;
    right: 65px;
    bottom: 0;
    color: #bdbdbd;
    font-size: 17px;
    line-height: 26px;
}
.watermark p {
    margin: 0;
}
.watermark .big-line {
    font-size: 24px;
    line-height: 34px;
}

/* scroll bars */
.vscroll {
    width: 20px;
    display: flex;
    flex-direction: column;
    align-items: center;
    border-left: 2px solid #a9c4e9;
    border-right: 1px solid #6f93c3;
    background: linear-gradient(90deg, #6f92bf, #86a5cf);
}
.split {
    flex: none;
    background: #fff;
    border: 1px solid #7396c5;
}
.vscroll .split {
    width: 17px;
    height: 9px;
}
.arrow {
    flex: none;
    border: 6px solid transparent;
}
.arrow.up {
    border-top: none;
    border-bottom-color: #454f73;
    margin: 8px 0 7px;
}
.arrow.down {
    border-bottom: none;
    border-top-color: #454f73;
    margin: 0 0 8px;
}
.vscroll .thumb {
    flex: 0 1 670px;
    width: 17px;
    margin-bottom: auto;
    border: 1px solid #4d648f;
    border-radius: 2px;
    background: linear-gradient(90deg, #f1f4f8, #dfe4ec 45%, #b9c5d8 55%, #cbd6e6);
}
.sheet-bar {
    flex: none;
    display: flex;
    height: 21px;
    border-top: 1px solid #8fb0db;
    border-bottom: 1px solid #5f87b4;
    background: linear-gradient(#84a4d3, #9db8de 35%, #9bb4dc);
}
.sheet-nav {
    width: 79px;
    display: flex;
    align-items: center;
    justify-content: space-around;
    background: linear-gradient(#dbe8fa, #b6cff2);
    border-right: 1px solid #7d9cc9;
}
.sheet-tab {
    padding: 0 6px 0 9px;
    background: #fff;
    font-size: 15px;
    line-height: 19px;
    font-weight: bold;
}
.track {
    flex: 1;
}
.hscroll {
    flex: 0 1 779px;
    display: flex;
    align-items: center;
    margin-right: 1px;
    padding-right: 19px;
    background: linear-gradient(90deg, #7898c4 97%, #7ba0d8 97%);
}
.hscroll .split {
    width: 8px;
    height: 19px;
}
.arrow.left {
    border-left: none;
    border-right-color: #454f73;
    margin: 0 9px 0 7px;
}
.arrow.right {
    border-right: none;
    border-left-color: #454f73;
    margin: 0 9px 0 auto;
}
.hscroll .thumb {
    flex: 0 1 599px;
    display: flex;
    align-items: center;
    justify-content: center;
    height: 19px;
    border: 1px solid #4d648f;
    border-radius: 2px;
    background: linear-gradient(#eef1f6, #dfe4ec 45%, #b9c5d8 55%, #cbd6e6);
}

/* status bar */
.statusbar {
    flex: none;
    display: flex;
    height: 26px;
    line-height: 25px;
    border-top: 1px solid #f3f8ff;
    background: linear-gradient(#d6e5fa, #c2d8f7 32%, #aecbf3 34%, #d3e3f8);
}
.ready {
    width: 53px;
    padding-left: 7px;
    border-right: 1px solid #8aaad6;
}
.zoom-area {
    display: flex;
    align-items: center;
    margin-left: auto;
    padding: 0 5px 0 4px;
    border-left: 2px solid #6c93c8;
    background: linear-gradient(#c3d9f8, #a5c3ef 35%, #82a9e0 38%, #8fb3e6);
}
.views {
    display: flex;
    height: 23px;
    border: 1px solid #7197ca;
    border-radius: 2px;
    background: #c3d8f5;
}
.views button {
    width: 23px;
}
.views .on {
    background: linear-gradient(#fddca0, #fbb450 50%, #ffe17c);
}
.zoom-value {
    width: 50px;
    text-align: center;
}
.zoom-area input {
    appearance: none;
    width: 127px;
    height: 20px;
    margin: 0;
    background: linear-gradient(transparent 9px, #4d6fa5 9px, #4d6fa5 10px, #d9e7fa 10px, #d9e7fa 11px, transparent 11px);
}
.zoom-area input::-webkit-slider-thumb {
    appearance: none;
    width: 11px;
    height: 16px;
    border: 1px solid #4d6a96;
    border-radius: 1px 1px 6px 6px;
    background: #e6edf7;
}

/* taskbar */
.taskbar {
    position: relative;
    flex: none;
    display: flex;
    height: 48px;
    border-top: 1px solid #75868a;
    background: linear-gradient(90deg, #8c9ea0, #92a4a4 55%, #8b9d9c 62%, #728688 67%, #5b6c6a 76%, #66777a 86%, #82948f);
}
.wallpaper {
    position: absolute;
    top: 12px;
    right: 176px;
    bottom: 0;
    width: 454px;
    display: flex;
    justify-content: space-between;
    overflow: hidden;
    font: bold 48px/44px "Liberation Sans", sans-serif;
    color: #8b9c9c;
}
.start {
    width: 61px;
    margin-right: 1px;
}
.task {
    position: relative;
    width: 70px;
    margin-right: 3px;
    border: 1px solid transparent;
}
.task.open {
    background: #a1b2b2;
    border-color: #c4cecd;
    box-shadow: 0 0 0 1px #76878a;
}
.task.current {
    background: #bcc8c8;
    border-color: #f3f6f6;
}
.badge {
    position: absolute;
    right: 14px;
    bottom: 3px;
    width: 21px;
    height: 21px;
    border-radius: 8px;
    background: #fb4436;
    color: #fff;
    line-height: 20px;
    text-align: center;
    font-size: 11px;
}
.gadget {
    position: absolute;
    right: 355px;
    top: -3px;
    width: 40px;
    height: 40px;
    display: flex;
    align-items: center;
    justify-content: center;
    border: 1px solid #3b4a4b;
    background: #687b7b;
    box-shadow: inset 0 0 0 3px #7d9090;
}
.tray {
    position: relative;
    display: flex;
    align-items: center;
    gap: 10px;
    margin-left: auto;
    padding-right: 21px;
    color: #fff;
    font-size: 14px;
}
.tray svg:first-child {
    margin-right: 4px;
}
.lang {
    margin-left: 9px;
}
.clock {
    width: 62px;
    margin-left: 10px;
    line-height: 22px;
    text-align: center;
}
```
